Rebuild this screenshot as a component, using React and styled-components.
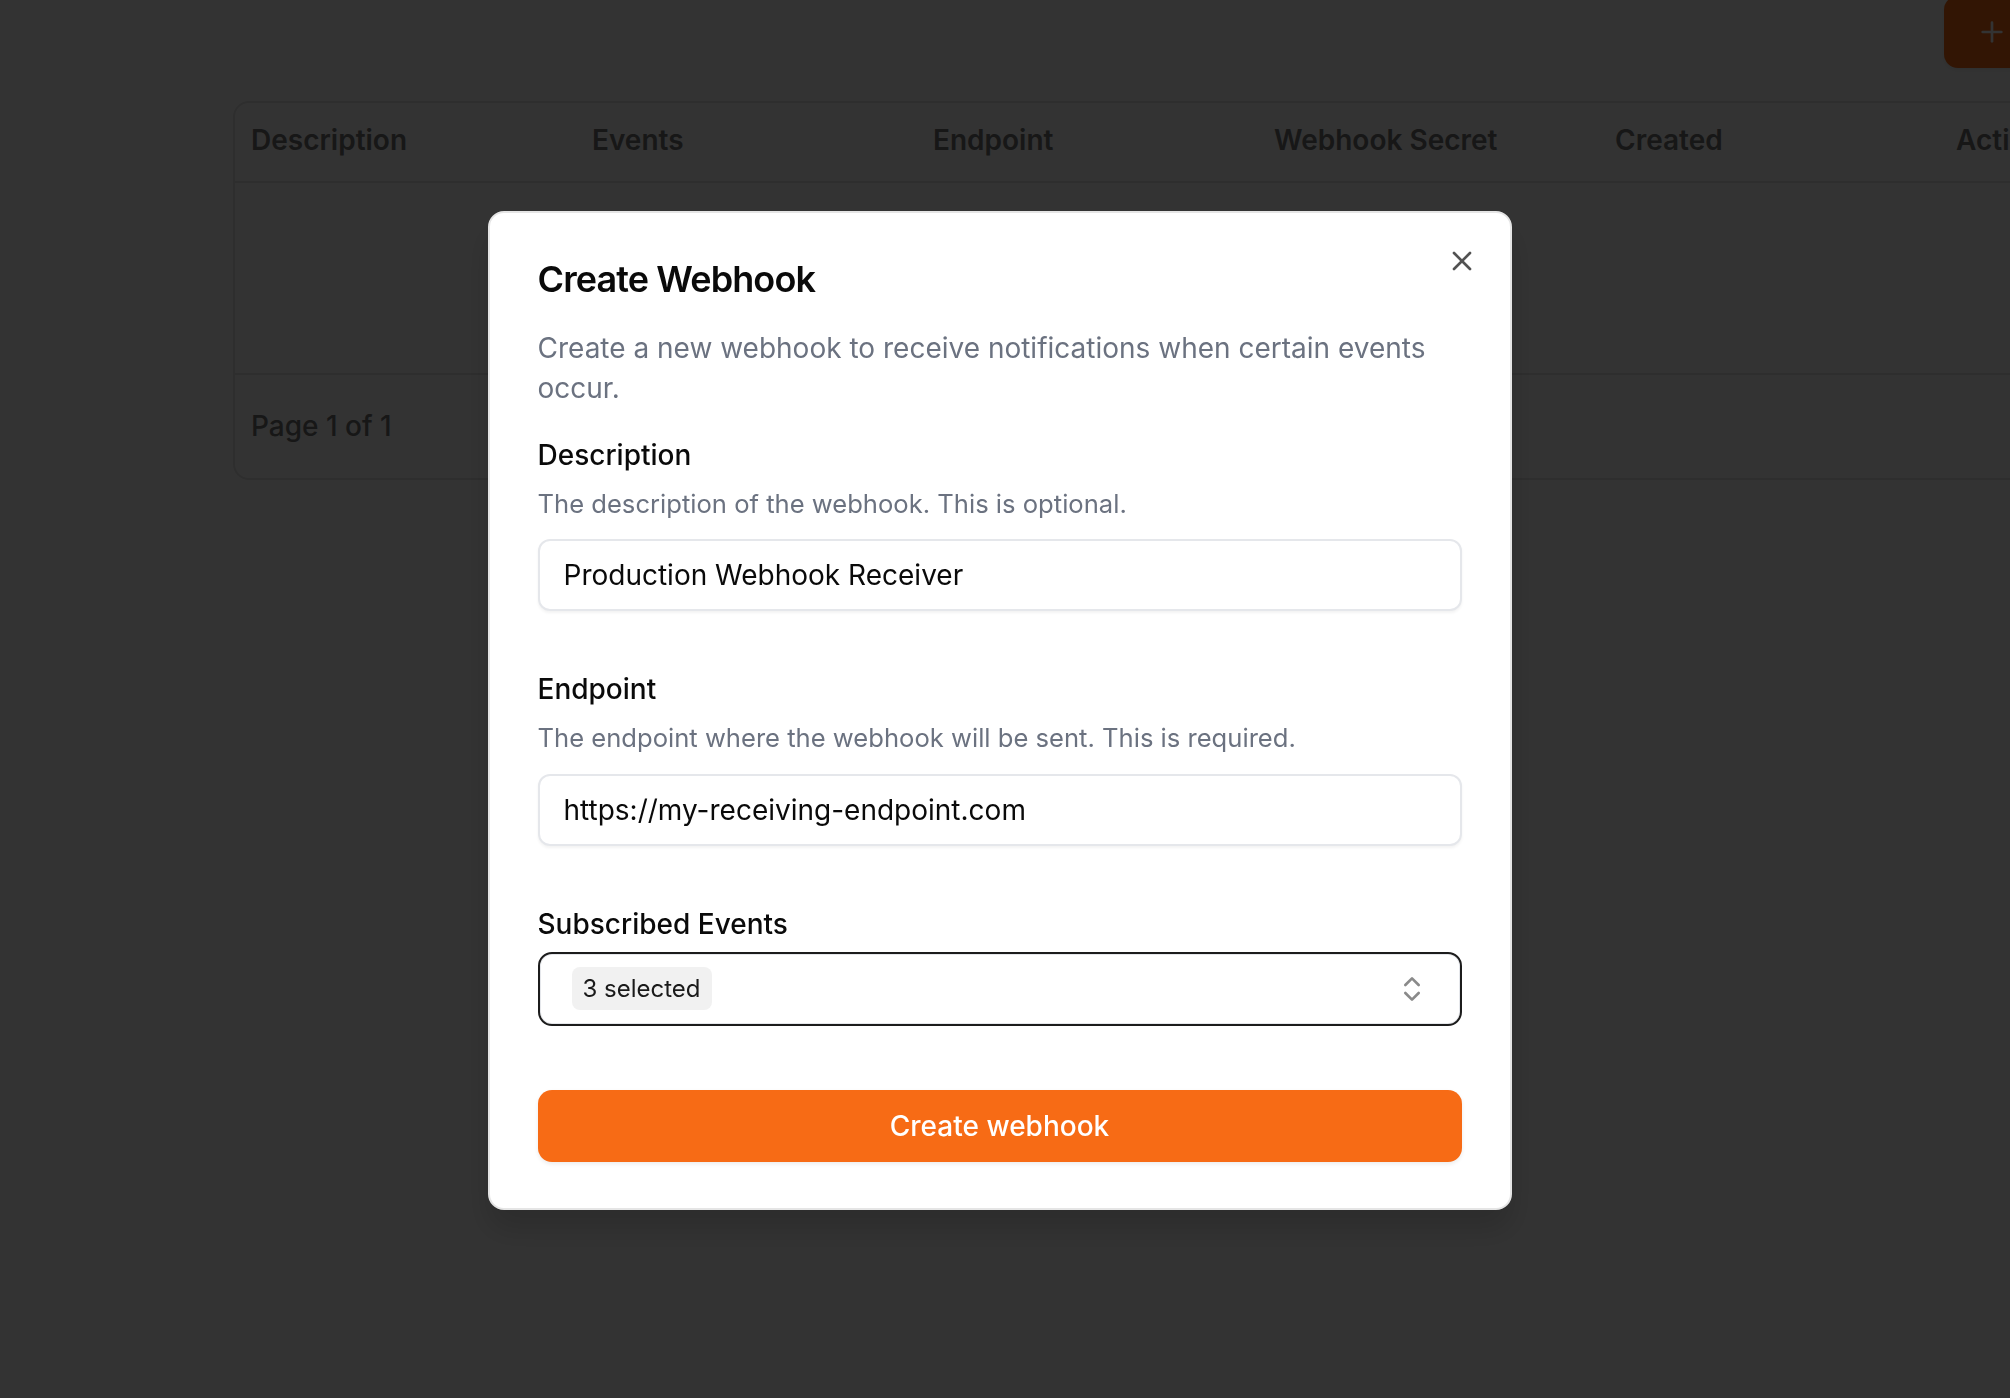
import styled, { createGlobalStyle } from 'styled-components';
import { Plus, X, ChevronsUpDown } from 'lucide-react';

const columns = ['Description', 'Events', 'Endpoint', 'Webhook Secret', 'Created', 'Actions'];

const GlobalStyle = createGlobalStyle`
  * { box-sizing: border-box; }
  html, body {
    margin: 0;
    padding: 0;
    background: #ffffff;
    overflow: hidden;
  }
  body {
    font-family: Inter, "Noto Sans", sans-serif;
    color: #0a0a0a;
  }
`;

const Page = styled.div`
  width: 2010px;
  height: 1398px;
  overflow: hidden;
  padding-left: 233px;
`;

const Content = styled.div`
  width: 2046px;
  display: flex;
  flex-direction: column;
  gap: 33px;
`;

const Toolbar = styled.div`
  height: 68px;
  display: flex;
  justify-content: flex-end;
  align-items: flex-end;
`;

const PrimaryButton = styled.button`
  height: 72px;
  display: inline-flex;
  align-items: center;
  justify-content: center;
  gap: 16px;
  padding: 0 32px;
  border: none;
  border-radius: 14px;
  background: #f76b15;
  color: #ffffff;
  font-family: inherit;
  font-size: 28px;
  font-weight: 500;
  box-shadow: 0 2px 4px rgba(0, 0, 0, 0.08);
  width: ${(p) => (p.$block ? '100%' : 'auto')};
`;

const Card = styled.div`
  border: 2px solid #e5e5e5;
  border-radius: 16px;
  overflow: hidden;
`;

const Row = styled.div`
  display: grid;
  grid-template-columns: repeat(6, 341px);
  height: ${(p) => p.$height}px;
  align-items: center;
  border-bottom: 2px solid #e5e5e5;
`;

const HeadCell = styled.div`
  padding: 0 16px 4px;
  font-size: 28px;
  font-weight: 600;
  color: #737373;
  white-space: nowrap;
`;

const EmptyCell = styled.div`
  grid-column: 1 / -1;
  text-align: center;
  font-size: 28px;
  color: #0a0a0a;
`;

const Footer = styled.div`
  height: 103px;
  display: flex;
  align-items: center;
  padding: 0 16px 2px;
  font-size: 28px;
  font-weight: 500;
  color: #737373;
`;

const Overlay = styled.div`
  position: fixed;
  inset: 0;
  background: rgba(0, 0, 0, 0.8);
  display: flex;
  justify-content: center;
  align-items: flex-start;
  padding: 211px 11px 0 0;
`;

const Dialog = styled.div`
  position: relative;
  width: 1024px;
  background: #ffffff;
  border: 2px solid #e5e5e5;
  border-radius: 16px;
  padding: 48px 48px 46px;
  box-shadow: 0 20px 30px rgba(0, 0, 0, 0.15);
  display: flex;
  flex-direction: column;
  gap: 33px;
`;

const CloseButton = styled.button`
  position: absolute;
  top: 32px;
  right: 32px;
  width: 32px;
  height: 32px;
  padding: 0;
  border: none;
  background: transparent;
  color: #0a0a0a;
  opacity: 0.7;
  display: flex;
`;

const Header = styled.div`
  display: flex;
  flex-direction: column;
  gap: 31px;
`;

const Title = styled.h2`
  margin: 0;
  font-size: 36px;
  line-height: 36px;
  font-weight: 600;
  letter-spacing: -0.9px;
`;

const Muted = styled.p`
  margin: 0;
  color: #6b7280;
  font-size: ${(p) => p.$size}px;
  line-height: ${(p) => p.$lh}px;
`;

const Form = styled.form`
  display: flex;
  flex-direction: column;
  gap: 64px;
`;

const Field = styled.div`
  display: flex;
  flex-direction: column;
  gap: ${(p) => p.$gap || 16}px;
`;

const Label = styled.label`
  font-size: 28px;
  line-height: 28px;
  font-weight: 500;
`;

const Input = styled.input`
  height: 72px;
  width: 100%;
  padding: 0 24px;
  border: 2px solid #e5e7eb;
  border-radius: 12px;
  font-family: inherit;
  font-size: 28px;
  color: #0a0a0a;
  background: #ffffff;
  box-shadow: 0 2px 3px rgba(0, 0, 0, 0.05);
  outline: none;
`;

const SelectTrigger = styled.div`
  height: 74px;
  display: flex;
  align-items: center;
  justify-content: space-between;
  padding: 0 32px;
  border: 2px solid #1c1c1c;
  border-radius: 14px;
  box-shadow: inset 0 0 0 1px #e5e7eb;
  color: #8a8a8a;
`;

const Chip = styled.span`
  height: 43px;
  display: inline-flex;
  align-items: center;
  padding: 0 11px;
  border-radius: 8px;
  background: #f1f1f1;
  color: #1a1a1a;
  font-size: 24px;
`;

export default function App() {
  return (
    <>
      <GlobalStyle />
      <Page>
        <Content>
          <Toolbar>
            <PrimaryButton>
              <Plus size={32} strokeWidth={2} />
              Create Webhook
            </PrimaryButton>
          </Toolbar>
          <Card>
            <Row $height={80}>
              {columns.map((c) => (
                <HeadCell key={c}>{c}</HeadCell>
              ))}
            </Row>
            <Row $height={192}>
              <EmptyCell>No results.</EmptyCell>
            </Row>
            <Footer>Page 1 of 1</Footer>
          </Card>
        </Content>
      </Page>

      <Overlay>
        <Dialog>
          <CloseButton aria-label="Close">
            <X size={32} strokeWidth={2} />
          </CloseButton>
          <Header>
            <Title>Create Webhook</Title>
            <Muted $size={28} $lh={40}>
              Create a new webhook to receive notifications when certain events occur.
            </Muted>
          </Header>
          <Form onSubmit={(e) => e.preventDefault()}>
            <Field>
              <Label>Description</Label>
              <Muted $size={25.6} $lh={38.4}>
                The description of the webhook. This is optional.
              </Muted>
              <Input defaultValue="Production Webhook Receiver" />
            </Field>
            <Field>
              <Label>Endpoint</Label>
              <Muted $size={25.6} $lh={38.4}>
                The endpoint where the webhook will be sent. This is required.
              </Muted>
              <Input defaultValue="https://my-receiving-endpoint.com" />
            </Field>
            <Field $gap={14}>
              <Label>Subscribed Events</Label>
              <SelectTrigger>
                <Chip>3 selected</Chip>
                <ChevronsUpDown size={32} strokeWidth={2} />
              </SelectTrigger>
            </Field>
            <PrimaryButton $block type="submit">
              Create webhook
            </PrimaryButton>
          </Form>
        </Dialog>
      </Overlay>
    </>
  );
}
